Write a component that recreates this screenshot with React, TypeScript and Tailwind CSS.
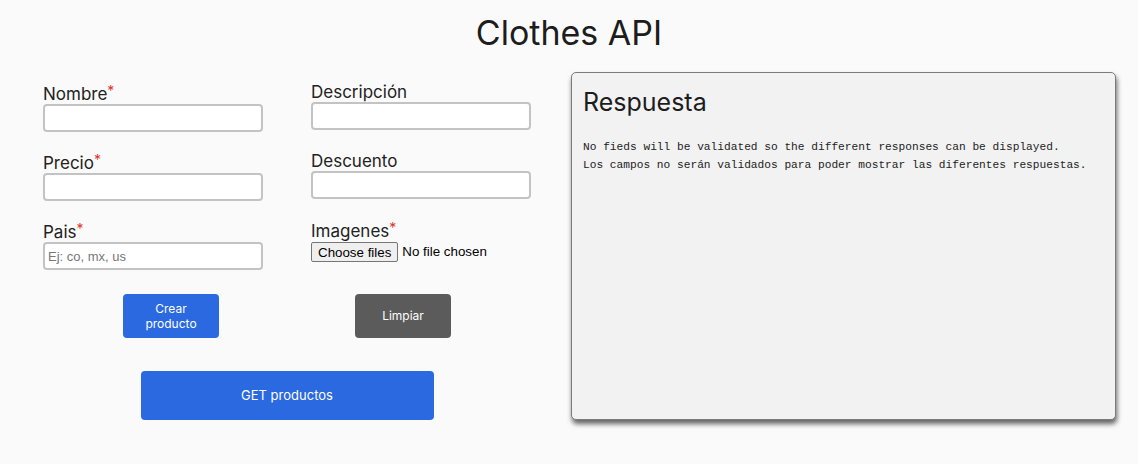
import React from 'react';

const Label: React.FC<{ text: string; required?: boolean }> = ({ text, required }) => (
    <label className="block text-[17px] leading-[20px] text-[#222]">
        {text}
        {required && <span className="text-[#e0352b] text-[14px] align-top leading-[14px]">*</span>}
    </label>
);

const TextInput: React.FC<{ placeholder?: string }> = ({ placeholder }) => (
    <input
        type="text"
        placeholder={placeholder}
        className="block w-[220px] h-[28px] bg-white border-2 border-[#c3c3c3] rounded-[4px] px-[3px] text-[13px] placeholder:text-[#777] outline-none"
        style={{ fontFamily: 'Arial, "Liberation Sans", sans-serif' }}
    />
);

export default function App() {
    return (
        <div className="min-h-screen bg-[#fafafa] text-[#222]" style={{ fontFamily: 'Inter, "Open Sans", sans-serif' }}>
            <h1 className="text-center text-[34px] leading-[42px] pt-[12px] text-[#1d1d1d]">Clothes API</h1>

            <div className="flex gap-[40px] pl-[43px] mt-[18px]">
                {/* Form */}
                <form className="w-[488px]" onSubmit={e => e.preventDefault()}>
                    <div className="grid grid-cols-2 gap-x-[48px]">
                        <div className="flex flex-col gap-[21px] pt-[12px]">
                            <div>
                                <Label text="Nombre" required />
                                <TextInput />
                            </div>
                            <div>
                                <Label text="Precio" required />
                                <TextInput />
                            </div>
                            <div>
                                <Label text="Pais" required />
                                <TextInput placeholder="Ej: co, mx, us" />
                            </div>
                        </div>
                        <div className="flex flex-col gap-[21px] pt-[10px]">
                            <div>
                                <Label text="Descripción" />
                                <TextInput />
                            </div>
                            <div>
                                <Label text="Descuento" />
                                <TextInput />
                            </div>
                            <div className="pt-[1px]">
                                <Label text="Imagenes" required />
                                <div className="flex items-center text-[13.33px] pt-[1px]" style={{ fontFamily: 'Arial, "Liberation Sans", sans-serif' }}>
                                    <button type="button" className="h-[20px] px-[6px] bg-[#efefef] border border-[#767676] rounded-[2px] text-black">
                                        Choose files
                                    </button>
                                    <span className="ml-[4px] text-black">No file chosen</span>
                                </div>
                            </div>
                        </div>
                    </div>

                    <div className="flex gap-[136px] pl-[80px] mt-[24px]">
                        <button type="submit" className="w-[96px] h-[44px] rounded-[4px] bg-[#2a69e0] text-white text-[12px] leading-[15px]">
                            Crear<br />producto
                        </button>
                        <button type="reset" className="w-[96px] h-[44px] rounded-[4px] bg-[#5b5b5b] text-white text-[12px]">
                            Limpiar
                        </button>
                    </div>

                    <button type="button" className="block mx-auto mt-[33px] w-[293px] h-[49px] rounded-[4px] bg-[#2a69e0] text-white text-[13px]">
                        GET productos
                    </button>
                </form>

                {/* Response panel */}
                <section className="w-[545px] h-[348px] bg-[#f2f2f2] border border-[#7b7b7b] rounded-[5px] shadow-[1px_4px_5px_rgba(0,0,0,0.6)] px-[11px] pt-[14px]">
                    <h2 className="text-[25px] leading-[30px] text-[#1d1d1d]">Respuesta</h2>
                    <div className="mt-[21px] text-[11.2px] leading-[18px] text-[#222]" style={{ fontFamily: '"Liberation Mono", "Courier New", monospace' }}>
                        <p>No fieds will be validated so the different responses can be displayed.</p>
                        <p>Los campos no serán validados para poder mostrar las diferentes respuestas.</p>
                    </div>
                </section>
            </div>
        </div>
    );
}
